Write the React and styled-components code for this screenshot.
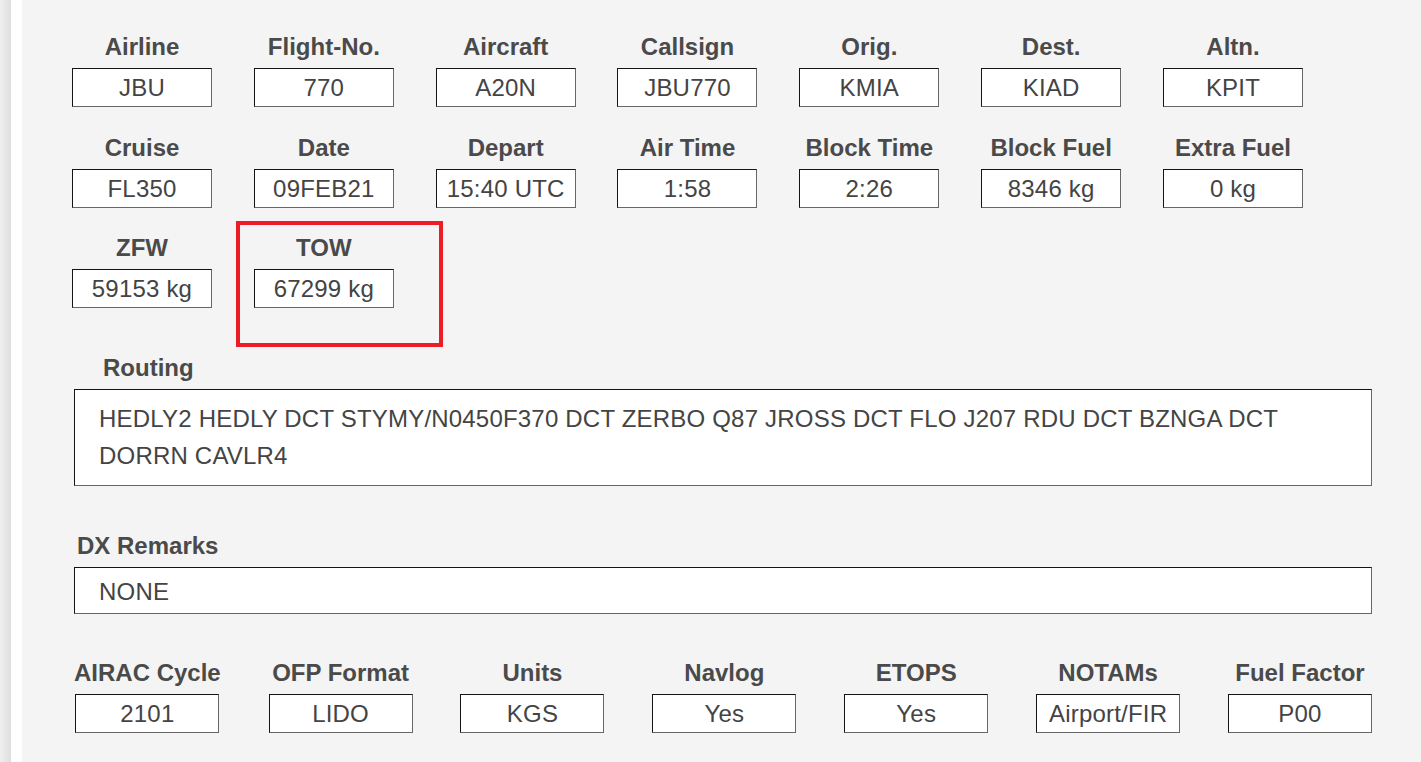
import React from "react";
import styled, { createGlobalStyle, css } from "styled-components";

const GlobalStyle = createGlobalStyle`
  html, body {
    margin: 0;
    padding: 0;
    background: #f4f4f4;
  }
  body {
    font-family: "Liberation Sans", Arial, sans-serif;
    letter-spacing: 0.2px;
  }
`;

const flight = [
  { label: "Airline", value: "JBU" },
  { label: "Flight-No.", value: "770" },
  { label: "Aircraft", value: "A20N" },
  { label: "Callsign", value: "JBU770" },
  { label: "Orig.", value: "KMIA" },
  { label: "Dest.", value: "KIAD" },
  { label: "Altn.", value: "KPIT" },
  { label: "Cruise", value: "FL350" },
  { label: "Date", value: "09FEB21" },
  { label: "Depart", value: "15:40 UTC" },
  { label: "Air Time", value: "1:58" },
  { label: "Block Time", value: "2:26" },
  { label: "Block Fuel", value: "8346 kg" },
  { label: "Extra Fuel", value: "0 kg" },
  { label: "ZFW", value: "59153 kg" },
  { label: "TOW", value: "67299 kg", marked: true },
];

const options = [
  { label: "AIRAC Cycle", value: "2101" },
  { label: "OFP Format", value: "LIDO" },
  { label: "Units", value: "KGS" },
  { label: "Navlog", value: "Yes" },
  { label: "ETOPS", value: "Yes" },
  { label: "NOTAMs", value: "Airport/FIR" },
  { label: "Fuel Factor", value: "P00" },
];

const ROUTE =
  "HEDLY2 HEDLY DCT STYMY/N0450F370 DCT ZERBO Q87 JROSS DCT FLO J207 RDU DCT BZNGA DCT DORRN CAVLR4";

function Field({ label, value, marked, wide }) {
  return (
    <FieldStyled $marked={marked}>
      <Label>{label}</Label>
      <ValueBox $wide={wide}>{value}</ValueBox>
    </FieldStyled>
  );
}

export default function App() {
  return (
    <>
      <GlobalStyle />
      <Frame>
        <Gutter />
        <Panel>
          <FlightGrid>
            {flight.map((f) => (
              <Field key={f.label} {...f} />
            ))}
          </FlightGrid>

          <Section>
            <BlockLabel $indent={29}>Routing</BlockLabel>
            <TextBlock $padTop={10} $padBottom={11}>
              {ROUTE}
            </TextBlock>
          </Section>

          <Section>
            <BlockLabel $indent={3}>DX Remarks</BlockLabel>
            <TextBlock $padTop={5} $padBottom={3}>
              NONE
            </TextBlock>
          </Section>

          <OptionsRow>
            {options.map((o) => (
              <Field key={o.label} {...o} wide />
            ))}
          </OptionsRow>
        </Panel>
      </Frame>
    </>
  );
}

const Frame = styled.div`
  display: flex;
  min-height: 100vh;
`;

const Gutter = styled.div`
  width: 11px;
  flex-shrink: 0;
  background: linear-gradient(to right, #efefef, #dedede);
`;

const Panel = styled.main`
  flex: 1;
  background: #f4f4f4;
  border-left: 11px solid #ffffff;
  padding: 33px 49px 28px 52px;
  box-sizing: border-box;
`;

const FlightGrid = styled.div`
  display: grid;
  grid-template-columns: repeat(7, 140px);
  column-gap: 41.83px;
  row-gap: 26.5px;
  margin-left: -2px;
`;

const FieldStyled = styled.div`
  position: relative;
  display: flex;
  flex-direction: column;
  align-items: center;

  ${({ $marked }) =>
    $marked &&
    css`
      &::after {
        content: "";
        position: absolute;
        left: -18px;
        top: -13px;
        right: -49px;
        bottom: -39px;
        border: 4px solid #ed1c24;
        pointer-events: none;
      }
    `}
`;

const Label = styled.div`
  font-size: 24px;
  line-height: 28px;
  font-weight: 700;
  letter-spacing: 0;
  color: #4a4a4a;
  white-space: nowrap;
  margin-bottom: 7px;
`;

const ValueBox = styled.div`
  box-sizing: border-box;
  width: ${({ $wide }) => ($wide ? "144px" : "140px")};
  height: 39px;
  background: #ffffff;
  border: 1px solid;
  border-color: #141414 #666666 #666666 #141414;
  font-size: 24px;
  line-height: 37px;
  color: #444444;
  text-align: center;
  white-space: nowrap;
`;

const Section = styled.section`
  margin-top: 45px;
`;

const BlockLabel = styled(Label)`
  padding-left: ${({ $indent }) => $indent}px;
  margin-bottom: 7px;
  padding-top: 1px;
`;

const TextBlock = styled.div`
  background: #ffffff;
  border: 1px solid;
  border-color: #141414 #666666 #666666 #141414;
  padding: ${({ $padTop, $padBottom }) => `${$padTop}px 24px ${$padBottom}px`};
  font-size: 24px;
  line-height: 37px;
  color: #444444;
`;

const OptionsRow = styled.div`
  display: flex;
  justify-content: space-between;
  margin-top: 45px;
`;
